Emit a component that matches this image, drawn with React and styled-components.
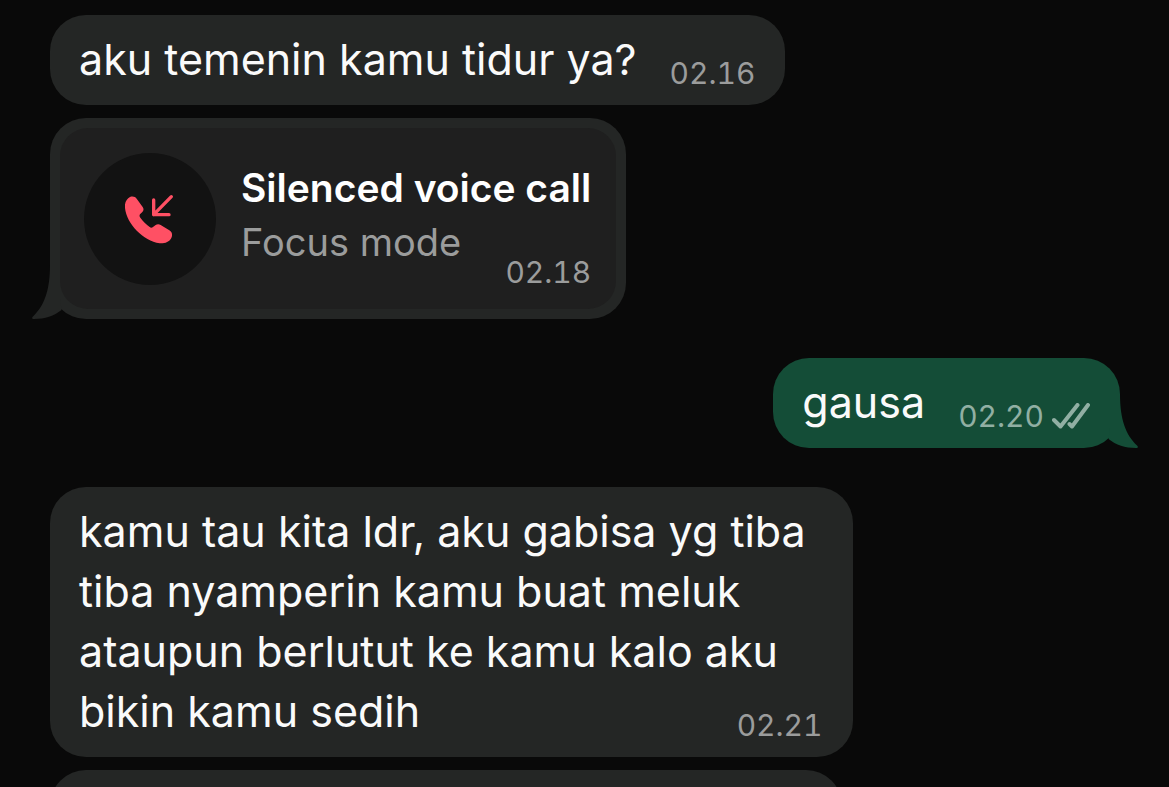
import React from "react"
import styled, { createGlobalStyle, css } from "styled-components"

const GlobalStyle = createGlobalStyle`
    * {
        box-sizing: border-box;
    }

    body {
        margin: 0;
        background: #090909;
        color: #fafafa;
        font-family: Inter, "Liberation Sans", sans-serif;
        -webkit-font-smoothing: antialiased;
    }
`

const Chat = styled.main`
    display: flex;
    flex-direction: column;
    gap: 39px;
    height: 100vh;
    padding: 15px 49px 0 50px;
    overflow: hidden;
`

const Group = styled.section`
    display: flex;
    flex-direction: column;
    flex-shrink: 0;
    align-items: ${({ $out }) => ($out ? "flex-end" : "flex-start")};
    gap: 13px;
`

const Bubble = styled.div`
    position: relative;
    display: flow-root;
    max-width: 75%;
    padding: 14px 30px 16px 29px;
    border-radius: 36px;
    background: ${({ $out }) => ($out ? "#144d37" : "#242625")};
    font-size: 43px;
    line-height: 60px;
    ${({ $call }) => $call && css`
        padding: 10px;
    `}
`

// the following message, still below the fold
const NextBubble = styled(Bubble)`
    width: 74%;
    height: 90px;
`

const Tail = styled.svg`
    position: absolute;
    bottom: 0;
    width: 30px;
    height: 70px;
    fill: ${({ $out }) => ($out ? "#144d37" : "#242625")};
    ${({ $out }) => $out ? css`
        right: -18px;
        transform: scaleX(-1);
    ` : css`
        left: -18px;
    `}
`

const Meta = styled.span`
    display: flex;
    align-items: center;
    gap: 8px;
    color: ${({ $out }) => ($out ? "#91afa3" : "#9b9c9c")};
    font-size: 30px;
    line-height: 32px;
    font-variant-numeric: tabular-nums;
`

const FloatMeta = styled(Meta)`
    float: right;
    margin: 28px 0 0 33px;
`

const Checks = styled.svg`
    width: 38px;
    height: 26px;
    fill: none;
    stroke: currentColor;
    stroke-width: 4;
    stroke-linecap: round;
    stroke-linejoin: round;
`

const CallCard = styled.div`
    display: flex;
    align-items: center;
    gap: 25px;
    padding: 0 25px 0 24px;
    border-radius: 28px;
    background: #1f1f1f;
`

const CallIcon = styled.div`
    display: flex;
    align-items: center;
    justify-content: center;
    flex-shrink: 0;
    width: 132px;
    height: 132px;
    border-radius: 50%;
    background: #121212;
`

const CallText = styled.div`
    padding: 33px 0 21px;
    font-size: 38px;
    line-height: 54px;
`

const CallTitle = styled.div`
    color: #fff;
    font-size: 39px;
    font-weight: 600;
`

const CallDetails = styled.div`
    display: flex;
    justify-content: space-between;
    color: #9b9c9c;
`

const CallMeta = styled(Meta)`
    margin-top: 41px;
`

const BubbleTail = ({ out }) => (
    <Tail $out={out} viewBox="0 0 30 70" aria-hidden="true">
        <path d="M18 16C18 42 12 57 1 67.500C-.5 69 0 70 2 70C13 70 22 67 29.500 61L28 50V16Z" />
    </Tail>
)

const DoubleCheck = () => (
    <Checks viewBox="0 0 38 26" aria-hidden="true">
        <path d="M2 17L8.500 23.500L25.500 2" />
        <path d="M17.500 21L20 23.500L36 2" />
    </Checks>
)

const IncomingCall = () => (
    <svg width="50" height="50" viewBox="45 40 150 150" aria-hidden="true">
        <path
            fill="#ff5064"
            d="M45 82C43 66 50 54 60 49C68 46 76 48 80 54L98 79C102 85 101 90 97 94L90 101C88 104 88 107 91 111C98 121 109 131 119 139C122 142 126 142 129 139L136 134C141 130 147 130 152 133L178 149C187 155 188 163 184 172C178 184 164 189 149 188C100 180 50 130 45 82Z"
        />
        <path
            fill="none"
            stroke="#ff5064"
            strokeWidth="10"
            strokeLinecap="round"
            strokeLinejoin="round"
            d="M184 48L131 102M131 58V102H177"
        />
    </svg>
)

const Message = ({ text, time, out, tail }) => (
    <Bubble $out={out}>
        {tail && <BubbleTail out={out} />}
        {text}
        <FloatMeta $out={out}>
            <time>{time}</time>
            {out && <DoubleCheck />}
        </FloatMeta>
    </Bubble>
)

const CallMessage = ({ title, reason, time }) => (
    <Bubble $call>
        <BubbleTail />
        <CallCard>
            <CallIcon>
                <IncomingCall />
            </CallIcon>
            <CallText>
                <CallTitle>{title}</CallTitle>
                <CallDetails>
                    <span>{reason}</span>
                    <CallMeta>
                        <time>{time}</time>
                    </CallMeta>
                </CallDetails>
            </CallText>
        </CallCard>
    </Bubble>
)

const App = () => {
    return (
        <>
            <GlobalStyle />
            <Chat>
                <Group>
                    <Message text="aku temenin kamu tidur ya?" time="02.16" />
                    <CallMessage title="Silenced voice call" reason="Focus mode" time="02.18" />
                </Group>
                <Group $out>
                    <Message text="gausa" time="02.20" out tail />
                </Group>
                <Group>
                    <Message
                        text="kamu tau kita ldr, aku gabisa yg tiba tiba nyamperin kamu buat meluk ataupun berlutut ke kamu kalo aku bikin kamu sedih"
                        time="02.21"
                    />
                    <NextBubble />
                </Group>
            </Chat>
        </>
    )
}

export default App
